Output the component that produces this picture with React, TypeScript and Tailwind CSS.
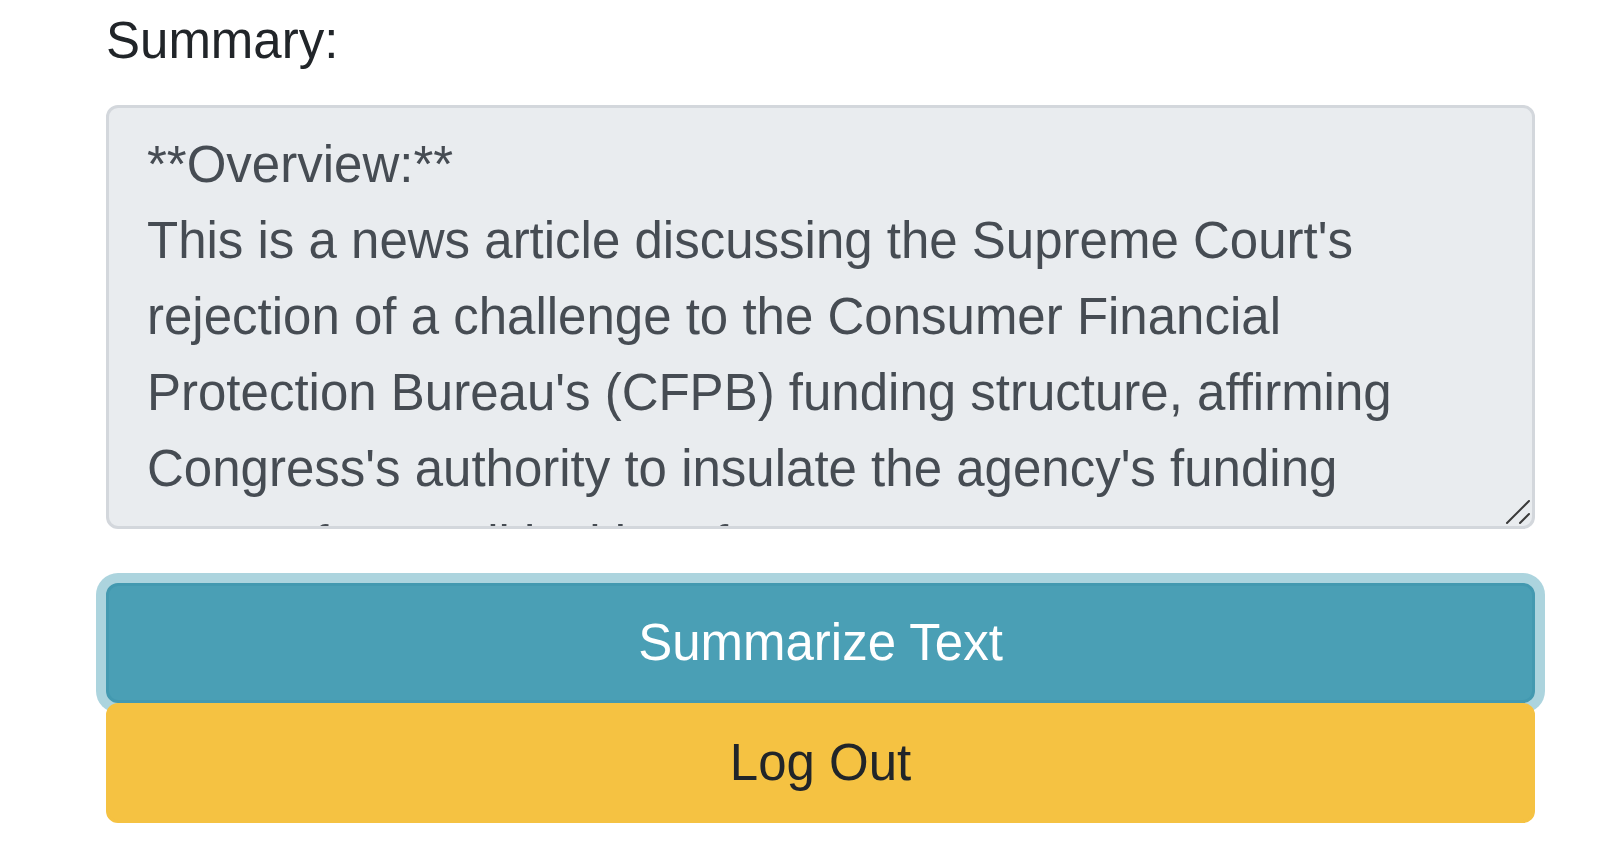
const summary = `**Overview:**
This is a news article discussing the Supreme Court's rejection of a challenge to the Consumer Financial Protection Bureau's (CFPB) funding structure, affirming Congress's authority to insulate the agency's funding source from political interference.`;

const App = () => {
  return (
    <div className="min-h-screen bg-white font-['Liberation_Sans',Arial,sans-serif]">
      <div className="ml-[106px] w-[1429px] pt-[3px]">
        <label className="block text-[51px] leading-[76px] text-[#212529] mb-[26px]">Summary:</label>

        <div className="relative">
          <textarea
            readOnly
            value={summary}
            className="block w-full h-[424px] resize-none overflow-hidden bg-[#e9ecef] border-[3px] border-[#d3d7dc] rounded-[12px] px-[38px] py-[19px] text-[51px] leading-[76px] text-[#464c53] outline-none"
          />
          <svg className="absolute right-[4px] bottom-[3px] w-[26px] h-[26px]" viewBox="0 0 26 26">
            <line x1="2" y1="23" x2="24" y2="1" stroke="#3a3a3a" strokeWidth="2" strokeLinecap="round" />
            <line x1="15" y1="23" x2="24" y2="14" stroke="#3a3a3a" strokeWidth="2" strokeLinecap="round" />
          </svg>
        </div>

        <div className="mt-[54px] flex flex-col">
          <button className="h-[120px] w-full rounded-[12px] border-[3px] border-[#4399b0] bg-[#4a9fb5] text-[51px] leading-[76px] text-white shadow-[0_0_0_10px_#acd4de]">
            Summarize Text
          </button>
          <button className="relative h-[120px] w-full rounded-[12px] border-[3px] border-[#f5c242] bg-[#f5c242] text-[51px] leading-[76px] text-[#212529]">
            Log Out
          </button>
        </div>
      </div>
    </div>
  )
}

export default App
